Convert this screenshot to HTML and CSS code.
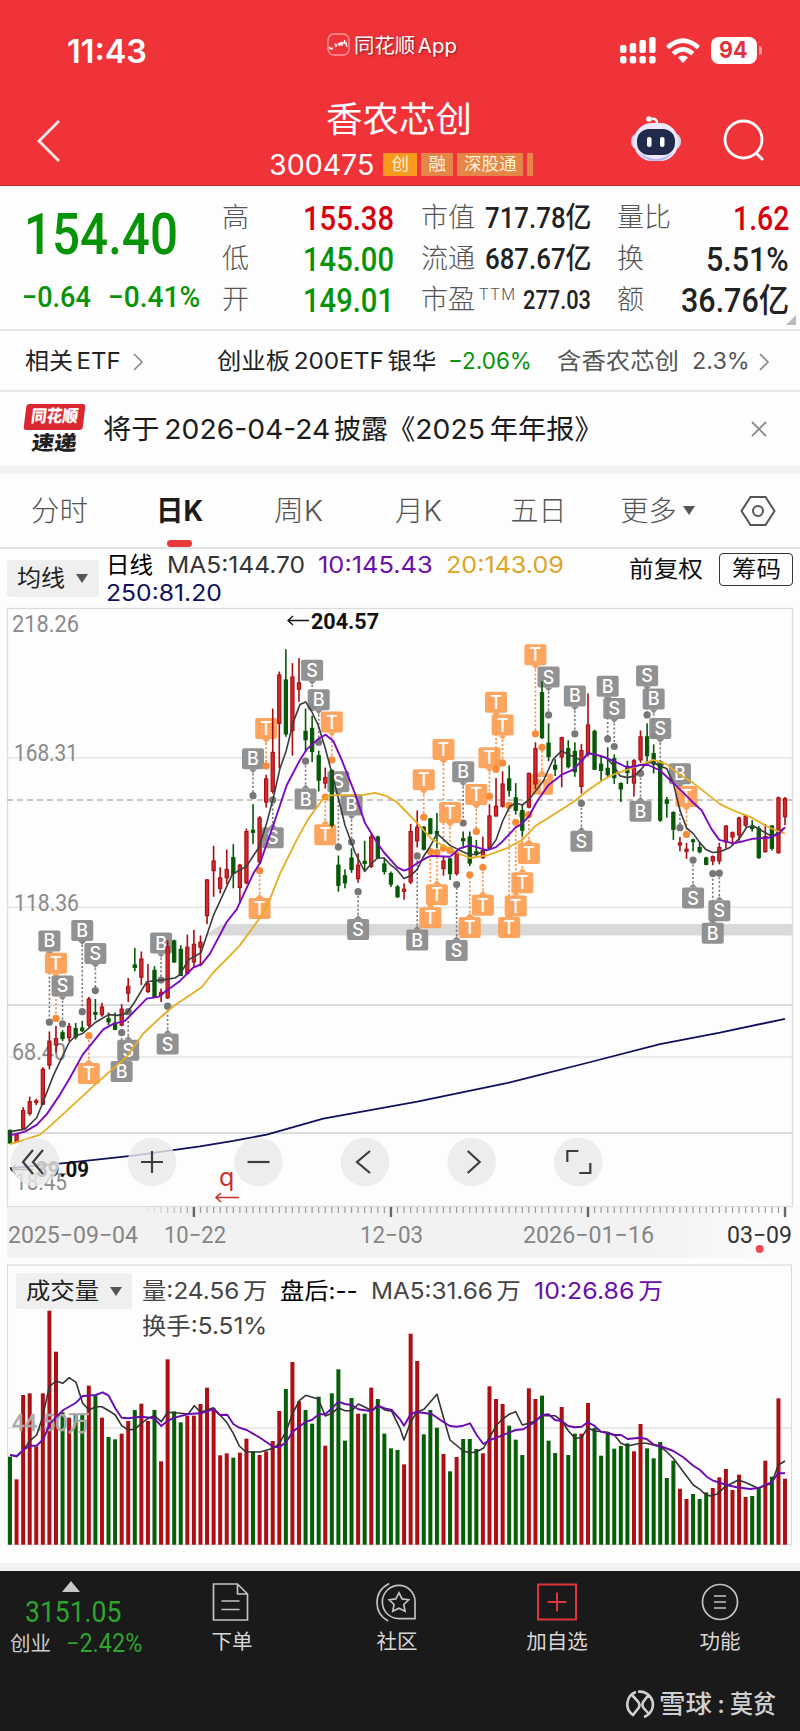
FILE: index.html
```html
<!DOCTYPE html>
<html lang="zh-CN">
<head>
<meta charset="utf-8">
<title>香农芯创 300475</title>
<link rel="stylesheet" href="styles.css">
</head>
<body>
<header class="top">
  <div class="status">
    <div class="clock"><span class="fit" data-w="80">11:43</span></div>
    <div class="app">
      <svg width="23" height="23" viewBox="0 0 23 23" fill="none" stroke="#fff"><rect x="1" y="1" width="21" height="21" rx="6" stroke="#ff9a9a" stroke-width="1.3"/><path d="M2 14l2 2 2-1M7.500 11l2 1-1 2M11 11l3-1-2 3M15 9v4M18 7l-1 3h3M19 11l1 3" stroke-width="1.5"/></svg>
      <span class="fit" data-w="103">同花顺 App</span>
    </div>
    <div class="sys">
      <svg class="signal" width="36" height="27" viewBox="0 0 36 27" fill="#fff"><rect y="8" width="6.500" height="8" rx="2"/><rect x="9.700" y="6" width="6.500" height="10" rx="2"/><rect x="19.400" y="3" width="6.500" height="13" rx="2"/><rect x="29.100" width="6.500" height="16" rx="2"/><rect y="19" width="6.500" height="7.500" rx="2.500"/><rect x="9.700" y="19" width="6.500" height="7.500" rx="2.500"/><rect x="19.400" y="19" width="6.500" height="7.500" rx="2.500"/><rect x="29.100" y="19" width="6.500" height="7.500" rx="2.500"/></svg>
      <svg class="wifi" width="34" height="26" viewBox="0 0 34 26" fill="none" stroke="#fff" stroke-width="4.600"><path d="M1.600 9.600Q17-4.400 32.400 9.600M7.200 15.700Q17 7 26.800 15.700"/><path d="M17 25l-5-5.500q5-4 10 0z" fill="#fff" stroke="none"/></svg>
      <div class="battery"><span class="fit" data-w="29">94</span></div><i class="nub"></i>
    </div>
  </div>
  <div class="titlebar">
    <svg class="back" width="26" height="44" viewBox="0 0 26 44" fill="none" stroke="#ffe9e9" stroke-width="2.800"><path d="M23 2L3 22l20 20"/></svg>
    <div class="name">
      <h1><span class="fit" data-w="146">香农芯创</span></h1>
      <div class="code"><span class="fit num" data-w="105">300475</span><b class="tag gold">创</b><b class="tag">融</b><b class="tag wide">深股通</b><b class="tag sliver"></b></div>
    </div>
    <svg class="robot" width="52" height="48" viewBox="0 0 52 48"><path d="M27 9q0-6-5-5" fill="none" stroke="#fff" stroke-width="2.500"/><circle cx="19" cy="4" r="2.800" fill="#fff"/><rect x="1" y="18" width="50" height="17" rx="8" fill="#d7d3f5"/><rect x="4" y="8" width="44" height="38" rx="18" fill="#ece9ff"/><path d="M9 37q17 14 34 0-6 9-17 9T9 37z" fill="#b8b4ee"/><rect x="7" y="14" width="38" height="26" rx="12" fill="#202a4b"/><rect x="17" y="22" width="4.500" height="10" rx="2" fill="#fff"/><rect x="30" y="22" width="4.500" height="10" rx="2" fill="#fff"/></svg>
    <svg class="search" width="44" height="44" viewBox="0 0 44 44" fill="none" stroke="#fff" stroke-width="2.800"><circle cx="21.500" cy="20.500" r="18.500"/><path d="M34 34l7 7"/></svg>
  </div>
</header>

<section class="quote">
  <div class="price">
    <div class="last"><span class="fit" data-w="154">154.40</span></div>
    <div class="chg"><span class="fit" data-w="69">−0.64</span><span class="fit" data-w="92">−0.41%</span></div>
  </div>
  <dl class="c2">
    <dt>高</dt><dd class="up"><span class="fit" data-w="91">155.38</span></dd>
    <dt>低</dt><dd class="down"><span class="fit" data-w="91">145.00</span></dd>
    <dt>开</dt><dd class="down"><span class="fit" data-w="91">149.01</span></dd>
  </dl>
  <dl class="c3">
    <dt>市值</dt><dd><span class="fit" data-w="106">717.78亿</span></dd>
    <dt>流通</dt><dd><span class="fit" data-w="106">687.67亿</span></dd>
    <dt>市盈<sup>TTM</sup></dt><dd class="pe"><span class="fit" data-w="68">277.03</span></dd>
  </dl>
  <dl class="c4">
    <dt>量比</dt><dd class="up"><span class="fit" data-w="56">1.62</span></dd>
    <dt>换</dt><dd><span class="fit" data-w="83">5.51%</span></dd>
    <dt>额</dt><dd><span class="fit" data-w="108">36.76亿</span></dd>
  </dl>
  <i class="corner"></i>
</section>

<section class="etf">
  <span class="fit" data-w="96">相关 ETF</span>
  <svg width="12" height="20" viewBox="0 0 12 20" fill="none" stroke="#888" stroke-width="1.600"><path d="M2 2l8 8-8 8"/></svg>
  <span class="fit etf-name" data-w="219">创业板 200ETF 银华</span>
  <span class="fit etf-chg" data-w="84">−2.06%</span>
  <span class="fit etf-in" data-w="122">含香农芯创</span>
  <span class="fit etf-pct" data-w="58">2.3%</span>
  <svg class="last-arrow" width="12" height="20" viewBox="0 0 12 20" fill="none" stroke="#888" stroke-width="1.600"><path d="M2 2l8 8-8 8"/></svg>
</section>

<section class="notice">
  <div class="badge"><div class="bub"><span class="fit" data-w="47">同花顺</span></div><div class="sub"><span class="fit" data-w="45">速递</span></div></div>
  <div class="msg"><span class="fit" data-w="227">将于 2026-04-24</span><span class="fit m2" data-w="54">披露</span><span class="fit m3" data-w="216">《2025 年年报》</span></div>
  <svg class="close" width="18" height="18" viewBox="0 0 18 18" stroke="#8a8a8a" stroke-width="1.800"><path d="M2 2l14 14M16 2L2 16"/></svg>
</section>

<nav class="tabs">
  <span class="fit t1" data-w="57">分时</span>
  <span class="on t2"><span class="fit" data-w="47">日K</span></span>
  <span class="fit t3" data-w="49">周K</span>
  <span class="fit t4" data-w="47">月K</span>
  <span class="fit t5" data-w="56">五日</span>
  <span class="fit t6" data-w="56">更多</span>
  <i class="caret"></i>
  <svg class="hex" width="36" height="32" viewBox="0 0 36 32" fill="none" stroke="#555" stroke-width="2"><path d="M10.500 2h15L34.500 16l-9 14h-15L1.500 16z"/><circle cx="18" cy="16" r="5"/></svg>
</nav>

<section class="ma">
  <div class="chip"><span class="fit" data-w="48">均线</span><i class="caret"></i></div>
  <div class="ma-lines">
    <div class="ma-row"><span class="fit black" data-w="47">日线</span><span class="fit ml16" data-w="138">MA5:144.70</span><span class="fit ml13 purple" data-w="115">10:145.43</span><span class="fit ml13 yellow" data-w="118">20:143.09</span></div>
    <div class="ma-row"><span class="fit navy" data-w="116">250:81.20</span></div>
  </div>
  <span class="fit adj" data-w="74">前复权</span>
  <div class="chips"><span class="fit" data-w="49">筹码</span></div>
</section>

<svg class="kline" id="kline" width="800" height="658" viewBox="0 600 800 658"></svg>

<section class="volume">
  <div class="vol-head">
    <div class="chip"><span class="fit" data-w="73">成交量</span><i class="caret"></i></div>
    <div class="vol-text">
      <div class="ma-row"><span class="fit" data-w="125">量:24.56 万</span><span class="fit black v2" data-w="78">盘后:--</span><span class="fit v3" data-w="150">MA5:31.66 万</span><span class="fit purple v4" data-w="129">10:26.86 万</span></div>
      <div class="ma-row"><span class="fit" data-w="125">换手:5.51%</span></div>
    </div>
  </div>
  <svg class="vol-plot" id="vol" width="800" height="282" viewBox="0 1264 800 282"></svg>
</section>

<footer class="dock">
  <div class="index">
    <i class="tri"></i>
    <div class="pt"><span class="fit" data-w="96">3151.05</span></div>
    <div class="pc"><span class="fit" data-w="41">创业</span><span class="fit pcv" data-w="76">−2.42%</span></div>
  </div>
  <div class="item i1"><svg width="38" height="40" viewBox="0 0 38 40" fill="none" stroke="#c2c2c2" stroke-width="1.700"><path d="M1.500 2h24l10 10v26h-34zM25.500 2v10h10M9.500 19h18M9.500 27.500h18"/></svg><span class="fit" data-w="41">下单</span></div>
  <div class="item i2"><svg width="42" height="41" viewBox="0 0 42 41" fill="none" stroke="#c2c2c2" stroke-width="1.700"><path d="M14 1.500Q1.500 8 1.500 21T13 40M24 3.500A17 17 0 1 0 24 37.500h16.500V20A16.500 16.500 0 0 0 24 3.500zM24 11l3.200 6.300 6.800.900-5 4.800 1.300 7L24 26.800 17.700 30l1.300-7-5-4.800 6.800-.9z"/></svg><span class="fit" data-w="41">社区</span></div>
  <div class="item i3"><svg width="42" height="38" viewBox="0 0 42 38" fill="none" stroke="#e0343c" stroke-width="2"><rect x="2" y="1.500" width="38" height="35"/><path d="M21 9.500v19M11.500 19h19"/></svg><span class="fit" data-w="62">加自选</span></div>
  <div class="item i4"><svg width="38" height="38" viewBox="0 0 38 38" fill="none" stroke="#c2c2c2" stroke-width="1.700"><circle cx="19" cy="19" r="17.500"/><path d="M13 13h12M13 19h12M13 25h12"/></svg><span class="fit" data-w="41">功能</span></div>
  <div class="mark">
    <svg width="29" height="29" viewBox="0 0 29 29" fill="none" stroke="#d0d0d0" stroke-width="2.600"><path d="M10 2A13 13 0 0 0 7 25l5.500-7q2.500-3.500-1-7L6 5M12 1.800A13 13 0 0 1 18 27M22.500 5l-5 6.500q-2.500 3.500.500 7l4.500 5"/></svg>
    <span class="fit wm1" data-w="53">雪球</span><span class="colon">:</span><span class="fit" data-w="46">莫贫</span>
  </div>
</footer>
<script src="chart.js"></script>
</body>
</html>
```
FILE: styles.css
```css
* { box-sizing: border-box; }
body { margin: 0; width: 800px; background: #fdfdfd; color: #222; font-family: Inter, "Noto Sans CJK SC", sans-serif; line-height: 1; overflow-x: hidden; }
svg { display: block; flex: none; }
h1, dl, dd, dt { margin: 0; font-weight: 400; }
.fit { display: inline-block; white-space: pre; word-spacing: -3px; transform-origin: left center; flex: none; }
.up { color: #d7000f !important; }
.down { color: #079307 !important; }

.top { height: 186px; background: #f03239; color: #fff; border-bottom: 1px solid #b8262c; }
.status { height: 91px; display: flex; align-items: flex-start; padding: 0 0 0 67px; }
.clock { width: 260px; padding-top: 36px; font-size: 32px; font-weight: 600; flex: none; }
.app { display: flex; gap: 4px; width: 293px; flex: none; padding-top: 33px; font-size: 20px; text-shadow: 1px 1px 2px #8a1a1a; }
.app .fit { padding-top: 3px; }
.sys { display: flex; align-items: center; padding-top: 37px; flex: none; }
.wifi { margin-left: 10px; }
.battery { margin-left: 11px; width: 46px; height: 27px; border-radius: 8px; background: #fff; color: #e0323c; font-size: 23px; font-weight: 700; display: flex; align-items: center; padding-left: 8px; }
.nub { width: 3px; height: 9px; margin-left: 2px; border-radius: 0 4px 4px 0; background: #f79a9e; }
.titlebar { display: flex; height: 94px; padding-left: 36px; }
.back { margin-top: 28px; }
.name { width: 361px; margin-left: 207px; }
.name h1 { margin-left: 57px; padding-top: 10px; height: 59px; font-size: 35px; line-height: 36px; }
.code { display: flex; align-items: center; height: 29px; }
.num { font-size: 28px; }
.tag { height: 23px; width: 32px; margin-left: 4px; background: #e58547; color: #fff3d8; font-size: 17.500px; font-weight: 400; line-height: 22px; text-align: center; flex: none; }
.tag.gold { width: 34px; margin-left: 9px; background: #f8991d; }
.tag.wide { width: 66px; }
.tag.sliver { width: 6px; }
.robot { margin-top: 24px; }
.search { margin: 28px 0 0 40px; }

.quote { height: 145px; display: flex; position: relative; border-bottom: 2px solid #e6e6e6; font-family: Roboto, "Noto Sans CJK SC", sans-serif; padding-left: 22px; }
.price { width: 200px; flex: none; color: #079307; }
.last { margin-left: 2px; padding-top: 19px; height: 92px; font-size: 58px; font-weight: 500; }
.chg { display: flex; gap: 17px; font-size: 29px; font-weight: 500; height: 44px; line-height: 38px; margin-top: 0; }
.quote dl { display: grid; flex: none; grid-template-columns: 54px minmax(0, 1fr); grid-auto-rows: 41px; align-items: center; padding-top: 12px; }
.c2 { width: 172px; }
.c3 { width: 170px; margin-left: 27px; }
.c4 { width: 172px; margin-left: 26px; }
.quote dt { font-size: 27px; color: #555; font-weight: 300; white-space: nowrap; }
.quote dt sup { font-size: 16px; margin-left: 4px; line-height: 0; vertical-align: 9px; letter-spacing: 1.500px; }
.quote dd { font-size: 33px; font-weight: 500; text-align: right; color: #222; display: flex; justify-content: flex-end; }
.quote .c3 dd { font-size: 29px; }
.quote .c3 dd.pe { font-size: 25px; }
.corner { position: absolute; right: 4px; bottom: 4px; border-left: 10px solid transparent; border-bottom: 10px solid #bbb; }

.etf { height: 61px; display: flex; align-items: center; padding: 2px 0 0 25px; border-bottom: 2px solid #e6e6e6; font-size: 23px; }
.etf svg { margin-left: 11px; }
.etf-name { margin-left: 73px; }
.etf-chg { margin-left: 12px; color: #079307; }
.etf-in { margin-left: 25px; color: #555; }
.etf-pct { margin-left: 13px; color: #555; }
.etf .last-arrow { margin-left: 8px; }

.notice { height: 82px; display: flex; padding-left: 25px; border-bottom: 8px solid #f2f2f2; }
.badge { width: 61px; padding-top: 12px; flex: none; }
.bub { width: 59px; height: 26px; transform: skewX(-7deg); border-radius: 3px; background: #d9282f; color: #fff; font-size: 17px; font-weight: 900; line-height: 25px; padding-left: 6px; }
.sub { font-size: 20px; font-weight: 900; padding: 3px 0 0 7px; transform: skewX(-7deg); }
.msg { display: flex; width: 632px; flex: none; padding: 24px 0 0 17px; font-size: 27.500px; color: #1c1c1c; }
.m2 { margin-left: 4px; }
.m3 { margin-left: -1px; }
.close { margin-top: 28px; margin-left: 32px; }

.tabs { height: 75px; display: flex; align-items: center; padding-left: 31px; border-bottom: 2px solid #e4e4e4; font-size: 28px; color: #555; font-weight: 300; }
.tabs .on { position: relative; color: #1c1c1c; font-weight: 700; }
.on::after { content: ""; position: absolute; left: 11px; top: 43px; width: 25px; height: 7px; border-radius: 4px; background: #e8383a; }
.t2 { margin-left: 68px; }
.t3 { margin-left: 71px; }
.t4 { margin-left: 72px; }
.t5 { margin-left: 68px; }
.t6 { margin-left: 54px; }
.caret { border: 6.500px solid transparent; border-top: 9px solid #555; border-bottom: 0; flex: none; }
.tabs .caret { margin-left: 7px; }
.hex { margin-left: 45px; }

.ma { height: 51px; display: flex; padding-left: 7px; font-size: 23px; color: #333; }
.chip { display: flex; align-items: center; background: #efefef; border-radius: 3px; width: 92px; height: 37px; padding-left: 10px; color: #222; flex: none; }
.chip .caret { margin-left: 11px; }
.ma .chip { margin-top: 11px; }
.ma-lines { width: 530px; padding-left: 7px; padding-top: 2px; }
.ma-row { display: flex; align-items: center; height: 28px; }
.ml16 { margin-left: 14px; }
.ml13 { margin-left: 13px; }
.black { color: #000; }
.purple { color: #6a0dad; }
.yellow { color: #dda426; }
.navy { color: #10105e; }
.adj { color: #111; padding-top: 9px; }
.chips { margin: 4px 0 0 16px; width: 74px; height: 33px; border: 1.500px solid #333; border-radius: 4px; color: #111; padding: 4px 0 0 12px; }

.kline { height: 658px; }
.kline text, .vol-plot text { font-family: Roboto, "Noto Sans CJK SC", sans-serif; }
.volume { height: 313px; padding-top: 6px; display: grid; border-bottom: 8px solid #f2f2f2; background: #fdfdfd; }
.vol-head, .vol-plot { grid-area: 1 / 1; }
.vol-head { display: flex; z-index: 1; height: 80px; padding: 9px 0 0 16px; font-size: 23px; color: #444; }
.vol-head .chip { width: 116px; height: 36px; }
.vol-text { padding-left: 10px; }
.vol-text .ma-row { height: 34px; }
.vol-text .ma-row:first-child { height: 36px; }
.v2, .v3, .v4 { margin-left: 13px; }

.dock { height: 160px; background: #1a1a1a; color: #d8d8d8; display: grid; grid-template-columns: 192px 80px 250px 70px 208px; grid-template-rows: 106px 54px; }
.index { padding-left: 10px; color: #2da42d; font-family: Roboto, "Noto Sans CJK SC", sans-serif; }
.tri { display: block; width: 0; margin: 10px 0 0 52px; border: 9px solid transparent; border-bottom: 11px solid #c8c8c8; border-top: 0; }
.pt { margin: 6px 0 0 15px; font-size: 29px; }
.pc { display: flex; align-items: center; height: 27px; margin-top: 3px; font-size: 20px; }
.pc .fit:first-child { color: #ccc; }
.pcv { margin-left: 15px; font-size: 25px; }
.item { display: flex; flex-direction: column; align-items: center; justify-content: flex-start; padding-top: 11px; font-size: 20.500px; }
.item svg { height: 40px; margin-bottom: 10px; }
.i1 svg { margin-right: 3px; }
.i2 svg { margin-right: 3px; }
.i4 { padding-left: 48px; }
.mark { grid-row: 2; grid-column: 1 / -1; display: flex; align-items: center; height: 54px; padding-left: 626px; font-size: 25px; color: #d0d0d0; font-weight: 500; }
.wm1 { margin-left: 4px; }
.colon { width: 18px; text-align: center; }
```
FILE: chart.js
```js
// Condense or widen each label to its column width.
document.querySelectorAll('.fit').forEach(function (el) {
  var w = +el.dataset.w, n = el.offsetWidth;
  el.style.transform = 'scaleX(' + w / n + ')';
  el.style.marginRight = (w - n) + 'px';
});

var STEP = 6.568, X0 = 10, YS = 2.3758;
function cx(i) { return X0 + STEP * i; }
function py(v) { return 600 + v / YS; }
function line(parts, mapY, color, w) {
  var pts = [];
  parts.forEach(function (p) {
    p[1].split(' ').forEach(function (s) {
      var a = s.split(',');
      pts.push(((+a[0] + p[0]) / 3).toFixed(1) + ',' + mapY(+a[1]).toFixed(1));
    });
  });
  return '<polyline points="' + pts.join(' ') + '" fill="none" stroke="' + color + '" stroke-width="' + w + '" stroke-linejoin="round"/>';
}
function rect(x, y, w, h, f, extra) { return '<rect x="' + x + '" y="' + y + '" width="' + w + '" height="' + h + '" fill="' + f + '" ' + (extra || '') + '/>'; }
function hline(y, c, x1, x2, extra) { return '<path d="M' + (x1 || 7) + ' ' + y + 'H' + (x2 || 792) + '" stroke="' + c + '" stroke-width="1.4" ' + (extra || '') + '/>'; }
function label(x, base, w, size, fill, t, wt) { return '<text x="' + x + '" y="' + base + '" font-size="' + size + '" font-weight="' + (wt || 400) + '" fill="' + fill + '" textLength="' + w + '" lengthAdjust="spacingAndGlyphs">' + t + '</text>'; }

// Colour, high, body top, body bottom, low.
var candles = ('G1258,1260,1290,1292 R1268,1270,1288,1290 R1205,1213,1255,1258 R1180,1192,1220,1225 R1185,1190,1194,1200 R1110,1115,1198,1200 R1025,1048,1105,1115 R1012,1042,1057,1075 G1022,1028,1042,1048 R1005,1013,1040,1048 ' +
'G1005,1018,1038,1044 G1000,1017,1023,1027 R943,948,1010,1015 G948,980,984,998 R957,967,985,990 G980,995,1002,1010 G980,1005,1020,1022 R960,972,1010,1013 R898,918,934,955 G827,867,873,882 ' +
'R835,853,896,915 R865,912,930,934 G870,880,942,945 R923,932,938,955 R808,824,945,948 G807,810,860,862 G820,830,892,893 R795,825,887,890 R784,818,860,873 R797,813,825,870 ' +
'R663,665,750,770 R584,620,643,705 R635,660,685,697 R593,640,660,675 G580,612,650,685 R627,630,683,720 R543,550,672,675 G485,547,552,580 R513,518,622,627 R415,425,480,493 ' +
'R258,362,455,460 R170,178,293,400 G117,190,318,325 R150,183,310,370 R138,197,212,242 G258,312,332,360 G275,305,360,385 G358,370,428,455 R398,422,435,448 G402,405,535,540 ' +
'G607,630,678,693 G640,655,672,685 G590,613,640,648 R602,630,662,672 G572,621,626,642 R557,563,633,637 G560,563,612,614 G612,627,645,652 G645,650,675,682 G677,682,705,708 ' +
'R673,687,692,712 R532,550,670,675 R500,540,572,588 G537,540,592,595 G518,520,555,557 G506,550,556,590 R610,620,638,655 G613,615,650,665 R597,600,650,655 G550,567,572,590 ' +
'G550,563,625,632 G570,598,604,608 R562,595,612,615 R485,513,588,592 R423,490,513,515 R407,437,490,493 G393,425,452,467 G435,470,500,510 G487,500,547,562 R410,412,492,495 ' +
'R338,353,437,450 G193,220,327,330 G293,340,372,383 G378,393,402,418 R325,327,373,445 G333,353,396,400 G338,360,408,420 R342,358,443,460 R222,297,365,372 G308,312,402,404 ' +
'G372,390,405,430 G350,400,415,420 G367,377,422,437 G433,436,449,480 G382,395,410,437 R378,382,435,467 R310,325,380,387 G293,325,370,385 G343,365,390,412 G383,390,523,527 ' +
'G468,475,483,517 G502,505,545,570 R563,577,582,597 R577,592,597,615 G567,570,574,597 G575,588,598,602 G610,613,628,630 R607,610,620,630 R577,588,620,628 R535,537,575,590 ' +
'R550,553,563,583 R515,518,558,572 R510,513,535,540 G523,537,543,550 G537,543,612,615 R532,562,598,600 G535,537,590,595 R467,470,600,603 R468,472,515,535').split(' ');

// Signal letter, candle index, flag centre, anchor dot.
var marks = 'B6,810,1003 T7,863,994 S8,917,1007 B11,785,978 S13,840,928 T12,1125,1035 B17,1120,1028 S18,1070,978 B23,815,903 S24,1055,965 B37,377,465 T39,305,394 T38,733,643 S40,565,475 S46,167,255 B47,237,338 T49,290,380 B45,473,383 T48,558,468 S50,432,587 B52,487,575 S53,783,693 B62,808,608 T63,427,516 T66,355,590 B69,408,530 T67,505,595 T64,755,598 T65,700,600 T70,778,653 T72,725,635 S68,833,676 T71,462,550 T73,375,466 T74,243,402 T75,297,387 T76,778,488 T77,727,528 T78,672,510 T79,602,510 T80,130,318 T81,438,350 S82,183,273 B86,228,318 S87,573,483 B91,205,330 S92,258,348 S97,180,273 B98,235,322 S99,305,390 B96,502,412 B102,413,541 T103,467,557 S104,708,618 B107,792,650 S108,738,649'.split(' ');

var h = '<defs><linearGradient id="fade"><stop offset=".8" stop-color="#f2f2f2"/><stop offset="1" stop-color="#fdfdfd"/></linearGradient></defs>';
h += rect(7, 1206, 793, 52, 'url(#fade)');
h += rect(7.5, 608.5, 785, 598, '#fdfdfd', 'stroke="#dcdcdc" stroke-width="1.3"');
[757.8, 907.3, 1057].forEach(function (y) { h += hline(y, '#e6e6e6'); });
[1005, 1133].forEach(function (y) { h += hline(y, '#cfcfcf'); });
h += '<path d="M222 924H792v11.500H204z" fill="#d9d9d9"/>';
h += hline(800, '#b9b4a5', 7, 792, 'stroke-dasharray="6 4"');
[[12, 632, 67, '218.26'], [14, 761, 64, '168.31'], [14, 911, 65, '118.36'], [12, 1060, 54, '68.40'], [15, 1190, 52, '18.45']].forEach(function (a) { h += label(a[0], a[1], a[2], 23, '#8b8b8b', a[3]); });

marks.forEach(function (m) {
  var t = m[0], a = m.slice(1).split(','), x = cx(+a[0]), y = py(+a[1]), d = py(+a[2]);
  var c = t === 'T' ? '#fd9f55' : '#8b8b8b', dc = t === 'T' ? '#f88b38' : '#777';
  var dir = d > y ? 1 : -1, e = y + dir * 10.5;
  h += '<path d="M' + x + ' ' + e + 'V' + d + '" stroke="' + dc + '" stroke-width="1.6" stroke-dasharray="2 2.2"/><circle cx="' + x + '" cy="' + d + '" r="3.6" fill="' + dc + '"/>';
  h += rect(x - 11, y - 10.5, 22, 21, c, 'rx="2" opacity=".94"') + '<path d="M' + (x - 4) + ' ' + e + 'h8l-4 ' + dir * 4 + 'z" fill="' + c + '"/>';
  h += '<text x="' + x + '" y="' + (y + 6.5) + '" text-anchor="middle" font-size="18" font-weight="500" fill="#fff" style="font-family:Inter,sans-serif">' + t + '</text>';
});
candles.forEach(function (s, i) {
  var v = s.slice(1).split(',').map(Number).map(py), r = s[0] === 'R', c = r ? '#a80d12' : '#075707', x = cx(i);
  h += rect(x - .8, v[0], 1.6, v[3] - v[0], c) + rect(x - 1.6, v[1], 3.2, Math.max(1, v[2] - v[1]), r ? '#cf2b30' : c, 'stroke="' + c + '" stroke-width="1.1"');
});
h += line([[0, '30,1263 75,1257 110,1230 128,1195 160,1130 208,1050 228,1035 248,1030 287,1003 326,985 355,987 380,982 404,955 440,907 484,903 525,898 540,890 565,855 603,838 640,750 697,652 740,632 775,590'], [780, '0,580 20,530 40,470 60,400 78,360 100,290 120,248 137,242 155,265 175,298 195,350 215,410 235,470 255,535 285,600 314,645 335,625 353,613 372,613 393,630 412,642 432,662 452,655 472,640 490,610 511,585 531,555 550,568 570,583 600,595 629,605 650,604 670,597 690,590 708,570 728,525 750,490 767,482'], [1560, '7,487 26,475 46,455 70,430 100,378 125,358 145,368 164,372 185,383 204,365 223,367 260,375 282,395 300,418 322,422 345,418 360,405 380,387 400,385 420,395 440,400 460,435 480,500 500,542 520,555 540,577 558,593 578,600 600,598 630,588 660,565 680,540 700,537 730,550 757,562 795,540']], py, '#3c3c3c', 1.6);
h += line([[0, '30,1293 75,1282 120,1270 150,1250 230,1192 280,1155 330,1120 380,1085 430,1030 484,990 520,965 605,920 640,885 690,845 720,820'], [780, '0,755 25,720 60,650 110,570 145,520 190,472 210,464 310,463 345,458 380,466 410,480 472,530 515,568 540,580 590,600 630,613 680,607 740,590'], [1560, '7,570 46,537 100,510 160,480 204,452 250,427 285,413 322,403 360,392 400,380 440,390 480,415 520,435 560,460 600,485 640,500 690,515 735,535 765,547 795,555']], py, '#e5ad22', 1.8);
h += line([[0, '30,1272 75,1263 110,1247 140,1222 180,1175 210,1135 248,1080 310,1020 340,1007 375,1000 440,947 475,943 500,928 540,905 580,873 605,865 630,840 680,765 710,735 760,650'], [780, '0,625 40,535 80,440 120,380 140,355 175,330 197,320 220,335 245,380 285,460 315,530 350,575 372,600 412,635 432,643 450,638 472,625 500,612 515,608 570,610 600,590 629,583 650,587 680,595 708,587 728,573 767,540'], [1560, '0,535 26,515 50,480 85,440 125,415 160,403 190,378 204,363 240,370 280,382 322,398 345,395 360,392 385,392 420,405 440,420 480,450 515,478 545,500 575,545 598,570 640,578 670,573 700,567 745,565 775,557 795,540']], py, '#7a0bbf', 1.9);
h += line([[0, '30,1350 200,1337 400,1320 600,1298 700,1285'], [780, '20,1270 190,1232 472,1192 740,1148'], [1560, '0,1140 200,1100 420,1055 600,1028 795,995']], py, '#10105e', 1.8);

h += '<path d="M309 620.500H288M293 616l-5 4.500 5 4.500" fill="none" stroke="#111" stroke-width="1.3"/>' + label(311, 629, 68, 22, '#111', '204.57', 700);
h += '<path d="M33 1169.500H11M16 1165l-5 4.500 5 4.500" fill="none" stroke="#111" stroke-width="1.3"/>' + label(36, 1177, 53, 22, '#111', '39.09', 700);
var icons = ['M-2-12-12 0-2 12M8-12-2 0 8 12', 'M-11 0H11M0-11V11', 'M-11 0H11', 'M5-11-8 0 5 11', 'M-4-11 8 0-4 11', 'M-11 0V-11H0M12 1V11H1'];
[35, 152, 258.5, 365, 471.7, 578.3].forEach(function (x, k) {
  h += '<g transform="translate(' + x + ' 1162)"><circle r="24.300" fill="#e9e9e9" opacity=".82"/><path d="' + icons[k] + '" fill="none" stroke="#3d3d3d" stroke-width="2.200"/></g>';
});
h += '<text x="219" y="1186" font-size="25" fill="#c8322c" style="font-family:Inter,sans-serif">q</text><path d="M239 1197.500H216M221 1193l-5 4.500 5 4.500" fill="none" stroke="#c8322c" stroke-width="1.600"/>';
for (var i = 21; i < 119; i++) {
  var major = i % 30 === 28;
  h += rect(cx(i) - (major ? 1.2 : .6), 1207, major ? 2.4 : 1.2, major ? 10 : 6, major ? '#666' : '#999', 'opacity="' + Math.min(1, (i - 20) / 8) + '"');
}
[[8, 130, '2025−09−04', '#858585'], [164, 62, '10−22', '#858585'], [360, 63, '12−03', '#858585'], [523, 131, '2026−01−16', '#858585'], [727, 65, '03−09', '#333']].forEach(function (a) { h += label(a[0], 1243, a[1], 23.5, a[3], a[2]); });
h += '<circle cx="759.700" cy="1249" r="4" fill="#e84a58"/>';
document.getElementById('kline').innerHTML = h;

var vols = 'G620 R688 R435 R430 R590 R430 R182 R305 G487 R503 G495 G490 R407 G435 R503 G561 G568 R551 R513 G480 R461 R513 G480 R634 R328 G484 G517 R497 R497 R462 R413 R475 R616 R610 G623 R608 R566 G604 R615 R604 R573 R483 G417 R336 R454 G480 G521 G440 R587 G430 G358 G572 G444 R491 G491 R413 G447 G551 G595 G600 R643 R251 R333 G553 G480 G533 R612 G664 R621 G567 G567 G597 R610 R409 R447 R462 G527 G569 G615 R415 R447 G437 G572 G609 R471 G615 G551 R551 R459 G534 G617 G551 G596 G588 G580 R604 R522 G595 G625 G576 G684 G632 R716 R747 G732 G747 G727 R714 R682 R657 R720 R674 R741 G738 G714 R632 G680 R445 R686'.split(' ');
function vy(v) { return 1250 + v / 3; }
var v = rect(7.5, 1265, 784, 279.7, '#fdfdfd', 'stroke="#dcdcdc" stroke-width="1.2"') + hline(1428, '#e2e2e2', 8, 791);
vols.forEach(function (s, i) {
  var y = vy(+s.slice(1));
  v += rect(cx(i) - 2, y, 4, 1544.7 - y, s[0] === 'R' ? '#ae0f14' : '#065e06');
});
v += '<g stroke="#b4b4b4" stroke-width=".7">' + label(12, 1431, 78, 23, '#a3a3a3', '44.50万') + '</g>';
v += line([[0, '32,615 50,620 70,600 90,572 110,555 128,500 148,410 168,393 188,400 208,383 228,397 248,460 267,480 287,470 306,470 326,482 346,495 365,527 385,540 404,538 424,520 444,505 463,497 484,515 503,487 543,490 565,492 583,467 602,487 640,473 660,495 680,517 700,550 718,588 738,606 780,606 820,595 838,580 858,545 878,490 898,452 917,436 955,447 976,498 996,490 1015,473 1035,482 1055,482 1075,462 1100,474 1115,482 1133,465 1155,480 1175,484 1200,535'], [1200, '12,570 32,515 50,487 72,478 111,433 131,505 150,570 190,603 210,608 228,606 250,595 270,560 290,525 307,508 327,493 347,485 367,525 387,520 406,513 426,497 465,497 485,512 505,542 525,565 545,563 563,533 583,543 623,547 643,555 663,580 683,588 720,580 740,580 780,590 800,605 820,625 850,665 880,705 900,718 915,733 930,738 950,733 975,710 1015,690 1035,697 1075,715 1115,700 1135,645 1155,633']], vy, '#333', 1.6);
v += line([[0, '30,615 50,618 70,600 90,587 110,587 130,568 150,520 190,480 228,458 248,438 287,435 308,427 326,437 346,475 365,503 385,505 424,500 463,505 484,528 503,512 524,503 565,492 602,490 640,478 660,495 682,494 700,522 718,533 740,540 780,563 820,590 838,592 858,577 878,545 917,515 935,510 957,493 976,493 996,475 1015,455 1035,462 1055,465 1075,478 1115,484 1133,467 1155,475 1175,480 1200,508'], [1200, '12,527 32,492 50,486 95,492 131,517 150,528 170,530 190,527 210,520 230,555 250,582 270,570 307,556 347,540 370,538 406,515 426,495 446,493 465,510 485,513 505,528 525,532 545,530 563,517 583,527 603,545 643,555 663,555 683,567 720,563 740,567 760,583 780,588 820,603 850,622 880,647 900,660 920,680 940,692 980,705 1010,712 1050,717 1075,714 1095,705 1115,697 1135,670 1155,670']], vy, '#6a0aaf', 1.9);
document.getElementById('vol').innerHTML = v;
```
